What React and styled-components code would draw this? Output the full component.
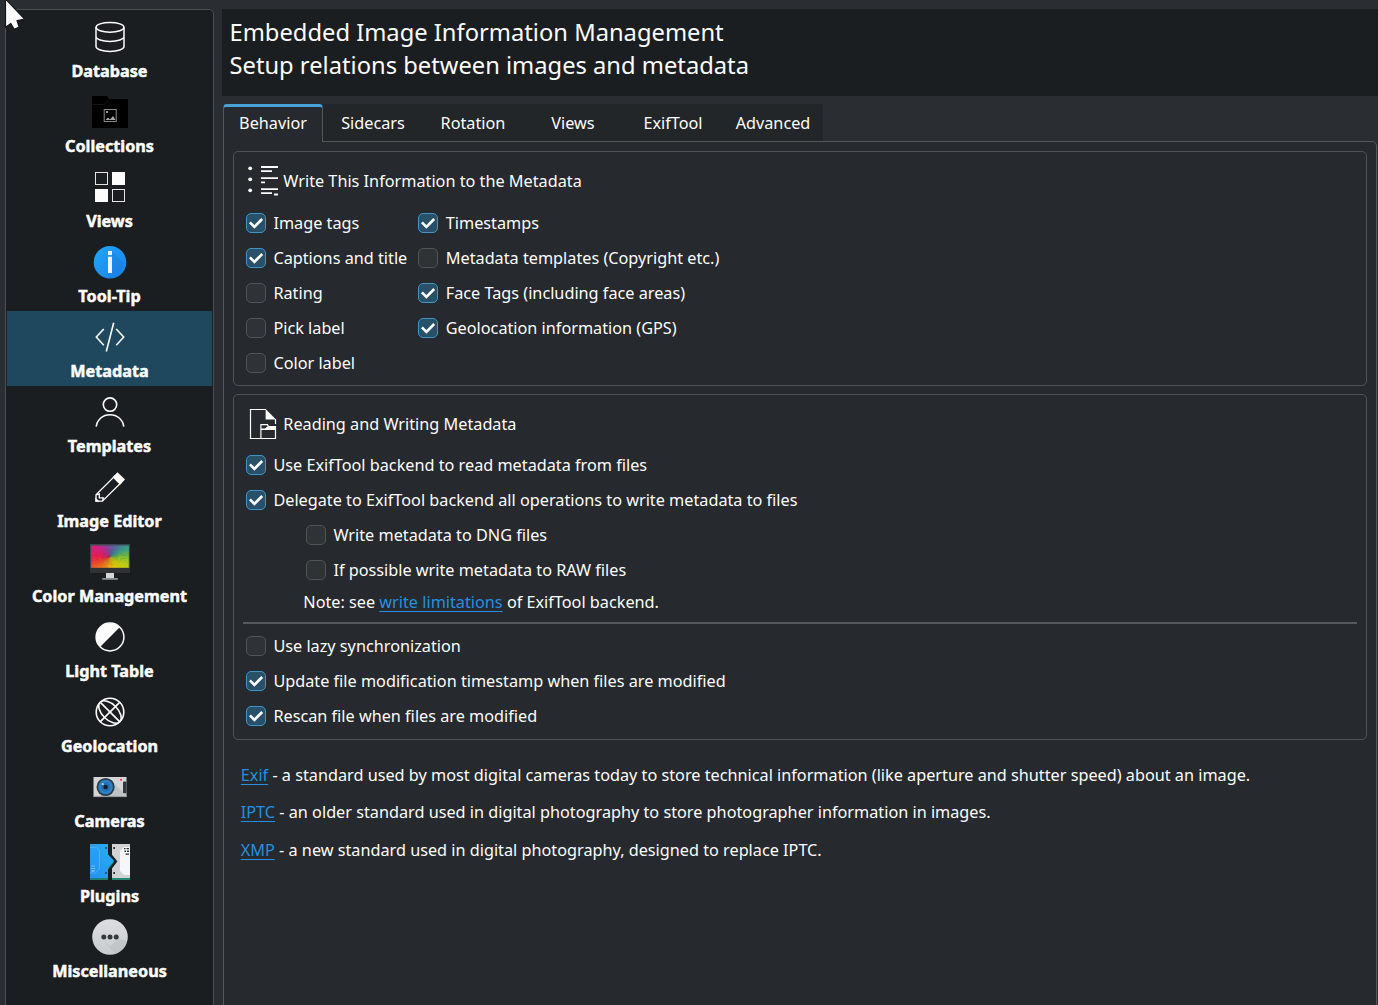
import React from "react";
import styled, { createGlobalStyle } from "styled-components";

const GlobalStyle = createGlobalStyle`
  * { box-sizing: border-box; }
  html, body { margin: 0; padding: 0; }
  body {
    background: #2a2e32;
    color: #fcfcfc;
    font-family: "Noto Sans", sans-serif;
    font-size: 16.24px;
    overflow: hidden;
  }
`;

const Window = styled.div`
  position: relative;
  display: flex;
  gap: 8px;
  width: 1378px;
  height: 1005px;
  padding: 9px 0 0 5px;
  overflow: hidden;
  background: #2a2e32;
`;

const Sidebar = styled.nav`
  flex: none;
  width: 209px;
  height: 1010px;
  padding: 1px;
  border: 1px solid #4b4f52;
  border-radius: 5px;
  background: #1b1e20;
`;

const NavItem = styled.div`
  display: flex;
  flex-direction: column;
  align-items: center;
  gap: 3px;
  height: 75px;
  padding-top: 6px;
  background: ${(p) => (p.$active ? "#1f485e" : "transparent")};
`;

const NavIcon = styled.svg`
  display: block;
  flex: none;
  width: 40px;
  height: 40px;
`;

const NavLabel = styled.span`
  font-weight: 700;
  font-size: 16.22px;
  line-height: 22px;
  white-space: nowrap;
  -webkit-text-stroke: 0.5px #fcfcfc;
`;

const Content = styled.main`
  flex: 1;
  min-width: 0;
  display: flex;
  flex-direction: column;
`;

const Header = styled.header`
  flex: none;
  height: 87px;
  padding: 7px 8px 6px 7.5px;
  background: #1b1e20;
  font-size: 23.72px;
  line-height: 33px;
`;

const TabBar = styled.div`
  display: flex;
  flex: none;
  align-items: flex-start;
  margin: 8px 0 -1px 1px;
  height: 38px;
  z-index: 1;
`;

const Tab = styled.div`
  width: 100px;
  height: ${(p) => (p.$active ? 38 : 37)}px;
  padding-top: ${(p) => (p.$active ? 5 : 8)}px;
  text-align: center;
  line-height: 22px;
  background: ${(p) => (p.$active ? "#26292d" : "#232629")};
  border: 0 solid #55585b;
  ${(p) =>
    p.$active &&
    `border-width: 3px 1px 0 1px;
     border-top-color: #46a3da;
     border-radius: 4px 4px 0 0;`}
`;

const TabPage = styled.section`
  flex: none;
  display: flex;
  flex-direction: column;
  gap: 8px;
  width: 1154px;
  height: 880px;
  margin-left: 1px;
  padding: 9px;
  border: 1px solid #55585b;
  border-radius: 0 5px 0 0;
  background: #26292d;
`;

const Group = styled.div`
  flex: none;
  height: ${(p) => p.$height}px;
  padding: 12px 9px 0 11px;
  border: 1px solid #505356;
  border-radius: 5px;
`;

const GroupTitle = styled.div`
  display: flex;
  align-items: center;
  gap: 4.3px;
  height: 34px;
  padding-left: 2px;
  margin-bottom: ${(p) => p.$gap}px;
`;

const GroupIcon = styled.svg`
  display: block;
  width: 32px;
  height: 34px;
`;

const Columns = styled.div`
  display: grid;
  grid-template-columns: 172.4px 1fr;
  align-items: start;
`;

const Row = styled.div`
  display: flex;
  align-items: center;
  gap: 7.4px;
  height: 35px;
  padding-left: ${(p) => (p.$indent ? 61 : 1)}px;
  white-space: nowrap;
`;

const Box = styled.span`
  display: flex;
  flex: none;
  width: 20px;
  height: 20px;
  border: 1px solid ${(p) => (p.$on ? "#3f95c6" : "#505457")};
  border-radius: 5px;
  background: ${(p) => (p.$on ? "#285069" : "#2f3336")};
`;

const RowLabel = styled.span`
  line-height: 22px;
`;

const Note = styled.p`
  margin: 4px 0 9px 58.3px;
  line-height: 22px;
`;

const Separator = styled.hr`
  height: 2px;
  margin: 0 0 4px -2px;
  border: 0;
  background: #55585c;
`;

const Link = styled.a`
  color: #2590e0;
  text-decoration: underline;
  text-decoration-thickness: 1px;
  text-underline-offset: 3px;
`;

const Notes = styled.div`
  display: flex;
  flex-direction: column;
  gap: 15.4px;
  padding: 16px 0 0 7.8px;
`;

const Paragraph = styled.p`
  margin: 0;
  line-height: 22px;
  white-space: nowrap;
`;

const Pointer = styled.svg`
  position: absolute;
  left: 0;
  top: 0;
  width: 32px;
  height: 36px;
`;

const WHEEL = [
  [0, [116, 82, 158]],
  [35, [78, 122, 160]],
  [60, [60, 160, 130]],
  [85, [120, 190, 60]],
  [110, [190, 208, 20]],
  [150, [232, 210, 0]],
  [180, [244, 170, 20]],
  [215, [246, 125, 25]],
  [245, [244, 70, 40]],
  [270, [236, 28, 80]],
  [300, [220, 30, 125]],
  [330, [170, 55, 155]],
  [360, [116, 82, 158]],
];

function wheelColor(angle) {
  const i = WHEEL.findIndex((stop) => stop[0] > angle);
  const [a0, c0] = WHEEL[i - 1];
  const [a1, c1] = WHEEL[i];
  const t = (angle - a0) / (a1 - a0);
  return `rgb(${c0.map((v, k) => Math.round(v + (c1[k] - v) * t)).join(",")})`;
}

function ColorWheel() {
  const point = (deg) => {
    const r = (deg * Math.PI) / 180;
    return `${20 + 30 * Math.sin(r)},${15 - 30 * Math.cos(r)}`;
  };
  return Array.from({ length: 60 }, (_, i) => (
    <polygon
      key={i}
      points={`20,15 ${point(i * 6)} ${point(i * 6 + 7)}`}
      fill={wheelColor(i * 6)}
    />
  ));
}

const line = { fill: "none", stroke: "#fcfcfc", strokeWidth: 1.5 };

const icons = {
  database: (
    <g {...line}>
      <ellipse cx="20" cy="10.3" rx="14" ry="4.9" />
      <path d="M6 10.3V29.5C6 32.2 12.3 34.4 20 34.4S34 32.2 34 29.5V10.3M6 19.6C6 22.4 12.3 24.4 20 24.4S34 22.4 34 19.6" />
    </g>
  ),
  collections: (
    <g>
      <path d="M2 4H17L19 7H38V36H2Z" fill="#000" />
      <path d="M2.5 12.5H14L18 9" fill="none" stroke="#151515" />
      <rect x="14.2" y="17.5" width="12" height="12" fill="none" stroke="#8b8b8b" />
      <path d="M15.5 28L18 25.5L20 27.5L23 24L25.5 28Z" fill="#aaa" />
      <rect x="16" y="19" width="2" height="2" fill="#999" />
    </g>
  ),
  views: (
    <g>
      <rect x="5.5" y="5.5" width="12" height="12" fill="none" stroke="#e4e4e4" />
      <rect x="22" y="5" width="13" height="13" fill="#fcfcfc" />
      <rect x="5" y="22" width="13" height="13" fill="#fcfcfc" />
      <rect x="22.5" y="22.5" width="12" height="12" fill="none" stroke="#e4e4e4" />
    </g>
  ),
  tooltip: (
    <g>
      <defs>
        <linearGradient id="tipFill" x1="0" y1="0" x2="1" y2="1">
          <stop offset="0" stopColor="#1fa8fb" />
          <stop offset="1" stopColor="#1c7fe4" />
        </linearGradient>
      </defs>
      <circle cx="20" cy="20.3" r="16.3" fill="url(#tipFill)" />
      <path d="M22 9L33.5 20.5A16.3 16.3 0 0 1 19 36.5L18 31L22 31Z" fill="#1877db" opacity=".35" />
      <path d="M18 9H22V13H18ZM18 14.7H22V31H18Z" fill="#eef4fa" />
    </g>
  ),
  metadata: (
    <g {...line} strokeWidth="1.6">
      <path d="M13.8 12L6.3 20L13.8 28.2M26.2 12L33.7 20L26.2 28.2M23.7 5.7L16.3 34.5" />
    </g>
  ),
  templates: (
    <g {...line} strokeWidth="1.6">
      <circle cx="20" cy="12.6" r="6.7" />
      <path d="M6.2 34.7C7.2 27.5 12.8 22.7 20 22.7S32.8 27.5 33.8 34.7" />
    </g>
  ),
  editor: (
    <g>
      <path d="M6 34.2V27.8L24.5 9.3L31 15.8L12.4 34.2Z" {...line} strokeWidth="1.3" />
      <path d="M22.5 10.2L27.5 5.3L35 12.6L30 17.7Z" fill="#fcfcfc" />
      <path d="M6.3 27.8L9.3 26.9V30.8H13.4L12.5 34" {...line} strokeWidth="1.3" />
      <path d="M5.4 30.5L9.8 34.8H5.4Z" fill="#fcfcfc" />
    </g>
  ),
  color: (
    <g>
      <defs>
        <clipPath id="screen">
          <rect x="1.2" y="3.4" width="37.6" height="22.4" />
        </clipPath>
      </defs>
      <rect x="0" y="2" width="40" height="29" fill="#38464d" />
      <rect x="0" y="26" width="40" height="5" fill="#303234" />
      <g clipPath="url(#screen)">
        <ColorWheel />
      </g>
      <rect x="16" y="31" width="8" height="5" fill="#d5d6d7" />
      <rect x="12.2" y="36" width="15.6" height="1.8" fill="#8b8d8f" />
    </g>
  ),
  light: (
    <g>
      <circle cx="20" cy="20" r="13.9" {...line} />
      <path d="M29.7 10.3A13.7 13.7 0 0 0 10.3 29.7Z" fill="#fcfcfc" />
    </g>
  ),
  geo: (
    <g {...line} strokeWidth="1.6">
      <circle cx="20" cy="20" r="13.8" />
      <path d="M10.1 10.1L29.9 29.9M10.1 29.9L29.9 10.1" />
      <ellipse cx="20" cy="20" rx="13.8" ry="7.8" transform="rotate(45 20 20)" />
    </g>
  ),
  camera: (
    <g>
      <rect x="3.5" y="10" width="33" height="20" fill="#d3d5d6" />
      <path d="M21 13.5L36.5 28V30H12L9 26.5Z" fill="#b4b7b9" opacity=".6" />
      <rect x="3.5" y="29.2" width="33" height=".9" fill="#8e9193" />
      <rect x="33" y="14.6" width="3.5" height="11.6" rx="1" fill="#30363a" />
      <circle cx="31" cy="12.8" r="1" fill="#d8324c" />
      <circle cx="15.6" cy="20" r="9.1" fill="#2b3c49" />
      <circle cx="15.6" cy="20" r="7.3" fill="#2d80c4" />
      <circle cx="15.6" cy="20" r="4.7" fill="#2470b4" />
      <circle cx="15.6" cy="20" r="2.3" fill="#11202c" />
      <circle cx="12.8" cy="17.2" r="1.1" fill="#a8d4f3" />
    </g>
  ),
  plugins: (
    <g>
      <defs>
        <linearGradient id="plugFill" x1="0" y1="1" x2="1" y2="0">
          <stop offset="0" stopColor="#2690ee" />
          <stop offset="1" stopColor="#28aef6" />
        </linearGradient>
      </defs>
      <path d="M0 2H18V13L24 20L18 28V38H0Z" fill="#217e73" />
      <path d="M0 2H18V12.5L24 18.7L18 26.2V36H0Z" fill="url(#plugFill)" />
      <path d="M0 5.5H6.5L9.5 8.5V27L5.5 31H0" fill="none" stroke="#56b9f7" strokeWidth=".7" />
      <path d="M15.2 5H17V7H15.2ZM15.2 30H17V32H15.2Z" fill="#1a567f" />
      <path d="M1.5 24H2.5M3.5 24H4.5M1.5 26.5H2.5M3.5 26.5H4.5M1.5 29H4.5" stroke="#bfe2fa" strokeWidth="1" />
      <path d="M22 2H40V38H22V28L27.5 20L22 13Z" fill="#258774" />
      <path d="M22 2H40V36H22V26.5L27.5 19.3L22 12.5Z" fill="#d0d2d3" />
      <path d="M40 5H34L30 9V29L34 33H40Z" fill="#f5f6f7" />
      <path d="M23.3 5H25V7H23.3ZM23.3 30H25V32H23.3ZM34 6H35.5V7.3H34ZM36.5 6H39V7.3H36.5ZM34.5 8.5H36V10H34.5ZM37 8.5H39V10H37ZM35.5 11.5H39V12.8H35.5Z" fill="#2c3033" />
    </g>
  ),
  misc: (
    <g>
      <defs>
        <linearGradient id="miscFill" x1="0" y1="0" x2="0" y2="1">
          <stop offset="0" stopColor="#dcdddf" />
          <stop offset="1" stopColor="#c9cdcf" />
        </linearGradient>
      </defs>
      <circle cx="20" cy="20" r="17.8" fill="url(#miscFill)" />
      <path d="M12 21.5L20 29.5L28 21.5L37 24A17.8 17.8 0 0 1 25 37.2Z" fill="#a9adb0" opacity=".3" />
      <g fill="#36393c">
        <circle cx="13.8" cy="20" r="2.5" />
        <circle cx="20" cy="20" r="2.5" />
        <circle cx="26.2" cy="20" r="2.5" />
      </g>
    </g>
  ),
};

const NAV = [
  ["database", "Database"],
  ["collections", "Collections"],
  ["views", "Views"],
  ["tooltip", "Tool-Tip"],
  ["metadata", "Metadata"],
  ["templates", "Templates"],
  ["editor", "Image Editor"],
  ["color", "Color Management"],
  ["light", "Light Table"],
  ["geo", "Geolocation"],
  ["camera", "Cameras"],
  ["plugins", "Plugins"],
  ["misc", "Miscellaneous"],
];

const TABS = ["Behavior", "Sidecars", "Rotation", "Views", "ExifTool", "Advanced"];

function Check({ on, indent, children }) {
  return (
    <Row $indent={indent}>
      <Box $on={on}>
        {on && (
          <svg width="18" height="18" viewBox="0 0 18 18">
            <path d="M2.9 8.3L7.4 12.8L15.2 5" fill="none" stroke="#fcfcfc" strokeWidth="2.6" />
          </svg>
        )}
      </Box>
      <RowLabel>{children}</RowLabel>
    </Row>
  );
}

export default function App() {
  return (
    <Window>
      <GlobalStyle />
      <Sidebar>
        {NAV.map(([icon, label]) => (
          <NavItem key={icon} $active={icon === "metadata"}>
            <NavIcon viewBox="0 0 40 40">{icons[icon]}</NavIcon>
            <NavLabel>{label}</NavLabel>
          </NavItem>
        ))}
      </Sidebar>
      <Content>
        <Header>
          <div>Embedded Image Information Management</div>
          <div>Setup relations between images and metadata</div>
        </Header>
        <TabBar>
          {TABS.map((name, i) => (
            <Tab key={name} $active={i === 0}>
              {name}
            </Tab>
          ))}
        </TabBar>
        <TabPage>
          <Group $height={235}>
            <GroupTitle $gap={7}>
              <GroupIcon viewBox="0 0 32 34">
                <g fill="#fcfcfc">
                  <circle cx="3.2" cy="4.3" r="1.9" />
                  <circle cx="3.2" cy="15.3" r="1.9" />
                  <circle cx="3.2" cy="26.3" r="1.9" />
                  <path d="M14 2H31V4H14ZM14 6.2H25V8H14ZM14 13.3H31V15.1H14ZM14 17.4H18V19.2H14ZM14 24.2H31V26H14ZM14 28.2H25V30H14ZM27 29.6H31V31.4H27Z" />
                </g>
              </GroupIcon>
              <span>Write This Information to the Metadata</span>
            </GroupTitle>
            <Columns>
              <div>
                <Check on>Image tags</Check>
                <Check on>Captions and title</Check>
                <Check>Rating</Check>
                <Check>Pick label</Check>
                <Check>Color label</Check>
              </div>
              <div>
                <Check on>Timestamps</Check>
                <Check>Metadata templates (Copyright etc.)</Check>
                <Check on>Face Tags (including face areas)</Check>
                <Check on>Geolocation information (GPS)</Check>
              </div>
            </Columns>
          </Group>
          <Group $height={346}>
            <GroupTitle $gap={6}>
              <GroupIcon viewBox="0 0 32 34">
                <path d="M14 31.5H3.5V2.5H19M28.5 12V17" fill="none" stroke="#fcfcfc" strokeWidth="1.2" />
                <path d="M18.6 2L29 12.5H18.6Z" fill="#fcfcfc" />
                <path d="M13.9 31.5V17.6H20.5L21.5 19.5H28.5V31.5Z" fill="none" stroke="#fcfcfc" strokeWidth="1.2" />
                <path d="M14 23V21.6H18L20.5 19.2H29V23Z" fill="#fcfcfc" />
              </GroupIcon>
              <span>Reading and Writing Metadata</span>
            </GroupTitle>
            <Check on>Use ExifTool backend to read metadata from files</Check>
            <Check on>Delegate to ExifTool backend all operations to write metadata to files</Check>
            <Check indent>Write metadata to DNG files</Check>
            <Check indent>If possible write metadata to RAW files</Check>
            <Note>
              Note: see <Link>write limitations</Link> of ExifTool backend.
            </Note>
            <Separator />
            <Check>Use lazy synchronization</Check>
            <Check on>Update file modification timestamp when files are modified</Check>
            <Check on>Rescan file when files are modified</Check>
          </Group>
          <Notes>
            <Paragraph>
              <Link>Exif</Link> - a standard used by most digital cameras today to store technical
              information (like aperture and shutter speed) about an image.
            </Paragraph>
            <Paragraph>
              <Link>IPTC</Link> - an older standard used in digital photography to store photographer
              information in images.
            </Paragraph>
            <Paragraph>
              <Link>XMP</Link> - a new standard used in digital photography, designed to replace IPTC.
            </Paragraph>
          </Notes>
        </TabPage>
      </Content>
      <Pointer viewBox="0 0 32 36">
        <path
          d="M5.5 -1V27.3L10.8 23.6L14.2 29.4L19.2 27L17 20.6L24.6 19Z"
          fill="#fcfcfc"
          stroke="#15171a"
          strokeWidth="1.2"
        />
      </Pointer>
    </Window>
  );
}
